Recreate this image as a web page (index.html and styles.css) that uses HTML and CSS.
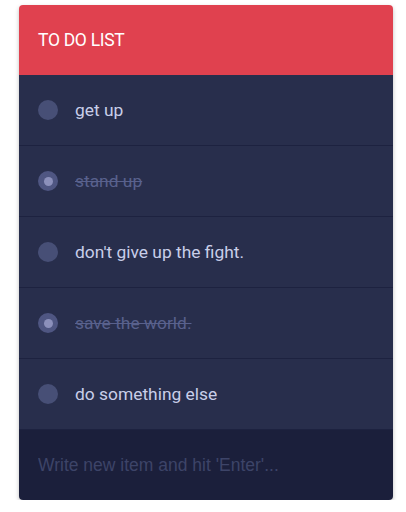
FILE: index.html
```html
<!DOCTYPE html>
<html>
<head>
    <title>To Do List</title>
    <link rel="stylesheet" href="styles.css">
</head>
<body>
    <div class="todo">
        <div class="todo-header">To Do List</div>
        <ul class="todo-list">
            <li class="todo-item"><span class="check"></span><span class="label">get up</span></li>
            <li class="todo-item done"><span class="check"></span><span class="label">stand up</span></li>
            <li class="todo-item"><span class="check"></span><span class="label">don't give up the fight.</span></li>
            <li class="todo-item done"><span class="check"></span><span class="label">save the world.</span></li>
            <li class="todo-item"><span class="check"></span><span class="label">do something else</span></li>
        </ul>
        <div class="todo-new">
            <input type="text" placeholder="Write new item and hit 'Enter'...">
        </div>
    </div>
</body>
</html>
```

FILE: styles.css
```css
body {
    margin: 0;
    padding: 5px 0 0 19px;
    background-color: #fff;
    font-family: Roboto, "Liberation Sans", sans-serif;
}

.todo {
    width: 374px;
    border-radius: 4px;
    overflow: hidden;
    box-shadow: 0 2px 4px rgba(0, 0, 0, 0.25);
}

.todo-header {
    height: 70px;
    display: flex;
    align-items: center;
    padding: 0 19px;
    background-color: #e0414f;
    color: #fff;
    font-size: 17.5px;
    letter-spacing: -0.3px;
    text-transform: uppercase;
}

.todo-list {
    list-style: none;
    margin: 0;
    padding: 0;
    background-color: #282e4c;
}

.todo-item {
    height: 70px;
    display: flex;
    align-items: center;
    padding: 0 19px;
    border-bottom: 1px solid #1d2240;
    color: #c9cee9;
    font-size: 17.4px;
}

.check {
    width: 20px;
    height: 20px;
    border-radius: 50%;
    background-color: #474f76;
    margin-right: 17px;
    flex-shrink: 0;
    display: flex;
    align-items: center;
    justify-content: center;
}

.done .check {
    background-color: #4f5682;
}

.done .check::after {
    content: "";
    width: 9px;
    height: 9px;
    border-radius: 50%;
    background-color: #8c90bb;
}

.done .label {
    color: #59618d;
    text-decoration: line-through;
}

.todo-new {
    height: 70px;
    display: flex;
    align-items: center;
    background-color: #1b1f3b;
}

.todo-new input {
    width: 100%;
    border: none;
    outline: none;
    background: transparent;
    padding: 0 19px;
    font-family: "Liberation Sans", Arial, sans-serif;
    font-size: 17.5px;
    color: #c9cee9;
}

.todo-new input::placeholder {
    color: #3d4468;
}
```
